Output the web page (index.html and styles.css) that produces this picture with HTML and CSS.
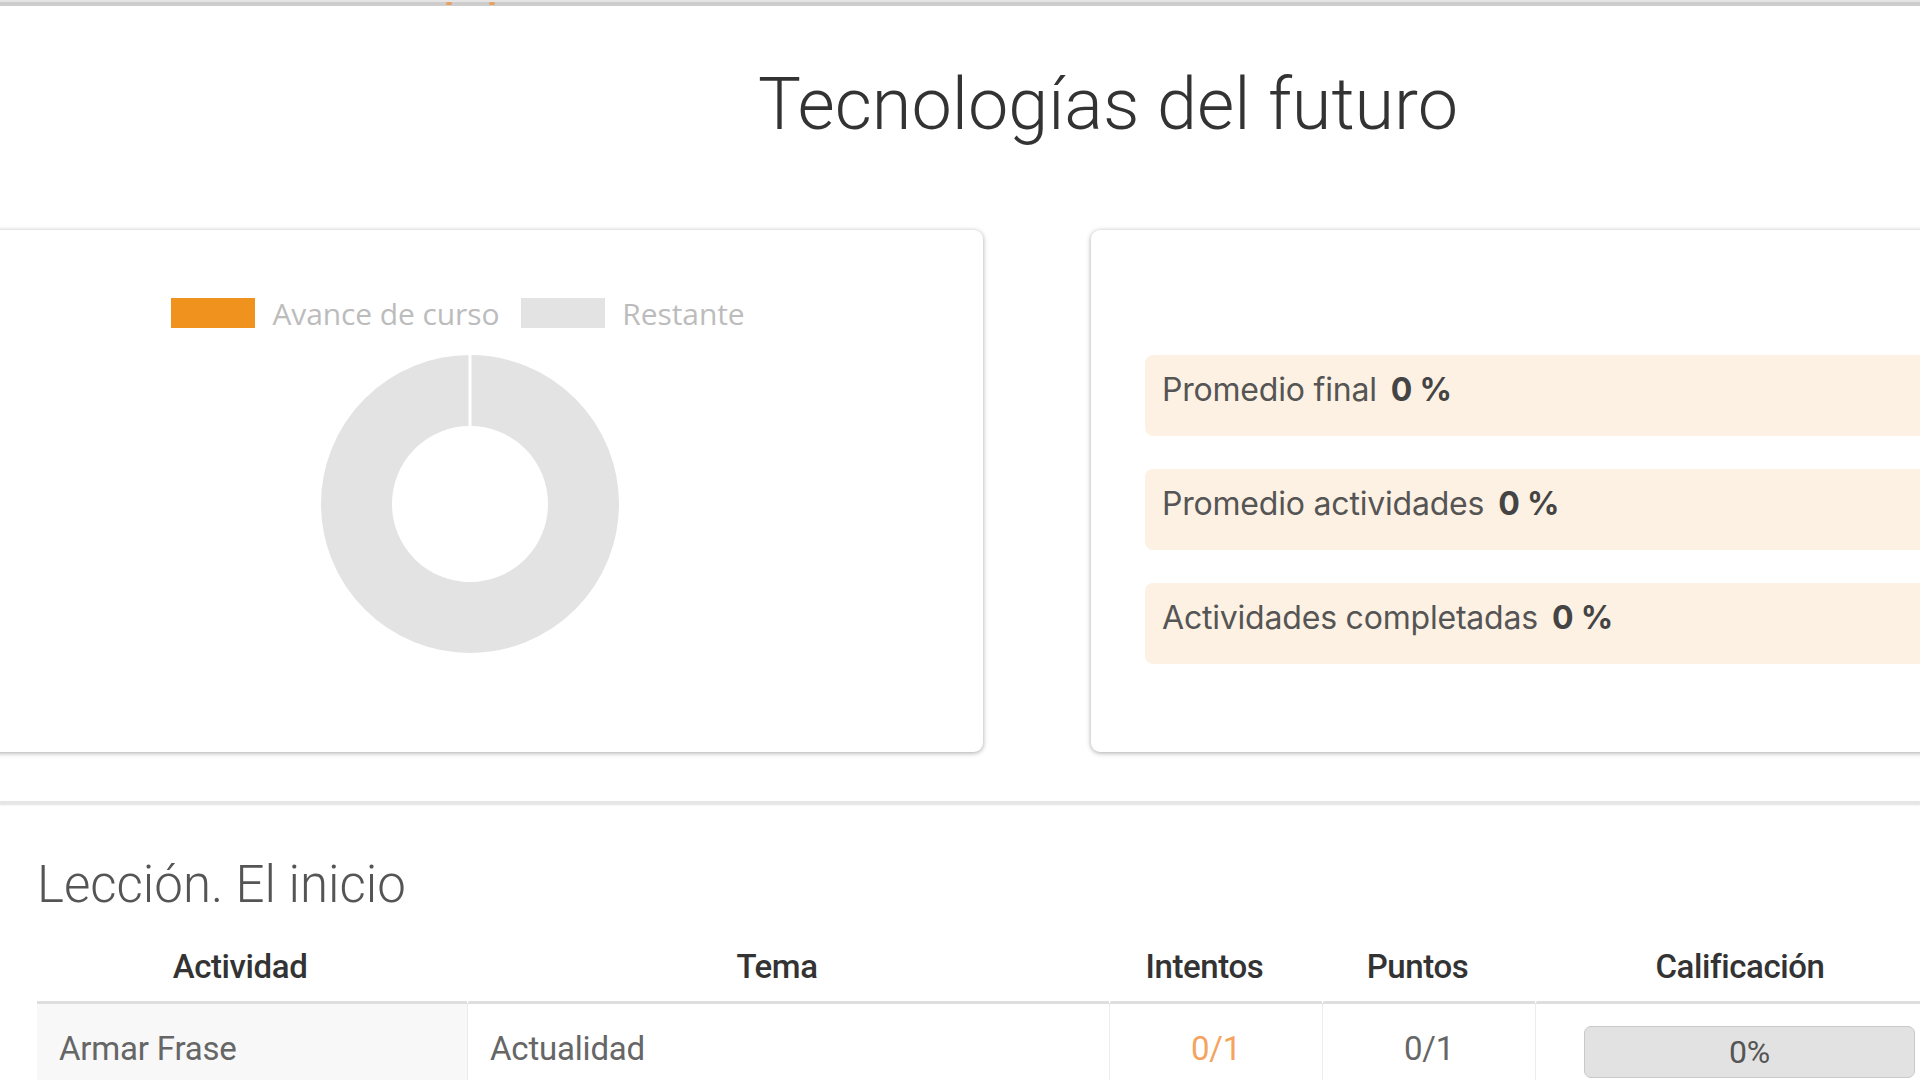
FILE: index.html
```html
<!DOCTYPE html>
<html lang="es">
<head>
<meta charset="utf-8">
<title>Tecnologías del futuro</title>
<link rel="stylesheet" href="styles.css">
</head>
<body>
<div class="topbar"><span class="mark mark-a"></span><span class="mark mark-b"></span></div>
<header class="page-head">
  <h1 class="page-title">Tecnologías del futuro</h1>
</header>
<section class="cards">
  <div class="card card-chart">
    <div class="legend">
      <span class="swatch swatch-orange"></span><span class="legend-label">Avance de curso</span>
      <span class="swatch swatch-gray"></span><span class="legend-label">Restante</span>
    </div>
    <svg class="donut" width="298" height="298" viewBox="0 0 298 298">
      <circle cx="149" cy="149" r="113.5" fill="none" stroke="#e3e3e3" stroke-width="71"/>
      <line x1="149" y1="0" x2="149" y2="72" stroke="#ffffff" stroke-width="3"/>
    </svg>
  </div>
  <div class="card card-stats">
    <div class="stat"><span class="stat-label">Promedio final</span><b class="stat-value">0 %</b></div>
    <div class="stat"><span class="stat-label">Promedio actividades</span><b class="stat-value">0 %</b></div>
    <div class="stat"><span class="stat-label">Actividades completadas</span><b class="stat-value">0 %</b></div>
  </div>
</section>
<div class="divider"></div>
<section class="lesson">
  <h2 class="lesson-title">Lección. El inicio</h2>
  <table class="grades">
    <colgroup>
      <col class="c1"><col class="c2"><col class="c3"><col class="c4"><col class="c5">
    </colgroup>
    <thead>
      <tr><th>Actividad</th><th>Tema</th><th>Intentos</th><th>Puntos</th><th>Calificación</th></tr>
    </thead>
    <tbody>
      <tr>
        <td class="cell-first">Armar Frase</td>
        <td>Actualidad</td>
        <td class="center orange">0/1</td>
        <td class="center">0/1</td>
        <td><div class="grade-bar">0%</div></td>
      </tr>
    </tbody>
  </table>
</section>
</body>
</html>
```
FILE: styles.css
```css
html, body {
  margin: 0;
  padding: 0;
  width: 1920px;
  height: 1080px;
  overflow: hidden;
  background: #ffffff;
}
body {
  font-family: Roboto, "Liberation Sans", sans-serif;
  color: #555;
}
.topbar {
  height: 4px;
  border-top: 2px solid #e4e4e4;
  background: #cdcdcd;
  display: flex;
  align-items: flex-start;
}
.mark {
  display: block;
  width: 6px;
  height: 3px;
  background: #e8a060;
  border-radius: 2px;
}
.mark-a { margin-left: 446px; }
.mark-b { margin-left: 37px; }

.page-head {
  padding: 63px 0 89px 296px;
  text-align: center;
}
.page-title {
  margin: 0;
  font-family: Roboto, sans-serif;
  font-weight: 300;
  font-size: 72px;
  line-height: 72px;
  color: #333;
}

.cards {
  display: flex;
  gap: 108px;
  margin-left: -20px;
  height: 522px;
}
.card {
  background: #fff;
  border-radius: 9px;
  box-shadow: 0 1px 5px rgba(0, 0, 0, 0.35);
  box-sizing: border-box;
  height: 522px;
}
.card-chart {
  flex: 0 0 1003px;
  display: flex;
  flex-direction: column;
  align-items: center;
  padding: 68px 23px 0 0;
}
.legend {
  display: flex;
  align-items: center;
  height: 30px;
  padding-right: 24px;
  font-family: "Open Sans", sans-serif;
  font-size: 30px;
  color: #bcbcbc;
}
.swatch {
  display: block;
  width: 84px;
  height: 30px;
}
.swatch-orange { background: #f0921e; }
.swatch-gray { background: #e3e3e3; margin-left: 22px; }
.legend-label { margin-left: 17px; letter-spacing: -0.1px; }
.donut {
  display: block;
  margin-top: 27px;
}

.card-stats {
  flex: 0 0 1000px;
  padding: 125px 0 0 54px;
  display: flex;
  flex-direction: column;
  gap: 33px;
}
.stat {
  height: 81px;
  box-sizing: border-box;
  background: #fdf1e3;
  border-radius: 8px;
  padding: 15px 0 0 17px;
  font-family: Inter, Roboto, sans-serif;
  font-size: 32px;
  line-height: 40px;
  color: #555;
  letter-spacing: -0.2px;
}
.stat-value {
  margin-left: 14px;
  font-weight: 700;
  color: #444;
}

.divider {
  margin-top: 49px;
  height: 3px;
  background: #e6e6e6;
  box-shadow: 0 1px 2px rgba(0, 0, 0, 0.12);
}

.lesson {
  padding-left: 37px;
}
.lesson-title {
  margin: 54px 0 0;
  font-family: Roboto, sans-serif;
  font-weight: 300;
  font-size: 51px;
  line-height: 54px;
  color: #555;
}
.grades {
  border-collapse: separate;
  border-spacing: 0;
  table-layout: fixed;
  width: 1906px;
  font-family: Roboto, sans-serif;
}
.c1 { width: 430px; }
.c2 { width: 642px; }
.c3 { width: 213px; }
.c4 { width: 213px; }
.c5 { width: 408px; }
.grades th {
  font-weight: 500;
  font-size: 33px;
  line-height: 36px;
  color: #333;
  padding: 37px 24px 16px 0;
  border-bottom: 3px solid #dedede;
  border-left: 2px solid #fff;
  text-align: center;
  letter-spacing: -0.4px;
}
.grades th:first-child { border-left: 0; }
.grades th:last-child { padding-right: 0; }
.grades td {
  font-size: 33px;
  line-height: 36px;
  color: #666;
  padding: 27px 0 30px 22px;
  border-left: 1px solid #ececec;
  vertical-align: top;
  letter-spacing: -0.2px;
}
.grades td.cell-first {
  border-left: 0;
  background: #f8f8f8;
}
.grades td.center {
  text-align: center;
  padding-left: 0;
}
.grades td.orange { color: #f4a460; }
.grades td:last-child {
  padding: 22px 0 0 48px;
}
.grade-bar {
  width: 331px;
  height: 52px;
  box-sizing: border-box;
  background: #e2e2e2;
  border: 1px solid #c9c9c9;
  border-radius: 7px;
  text-align: center;
  line-height: 50px;
  color: #555;
  font-size: 32px;
}
```
